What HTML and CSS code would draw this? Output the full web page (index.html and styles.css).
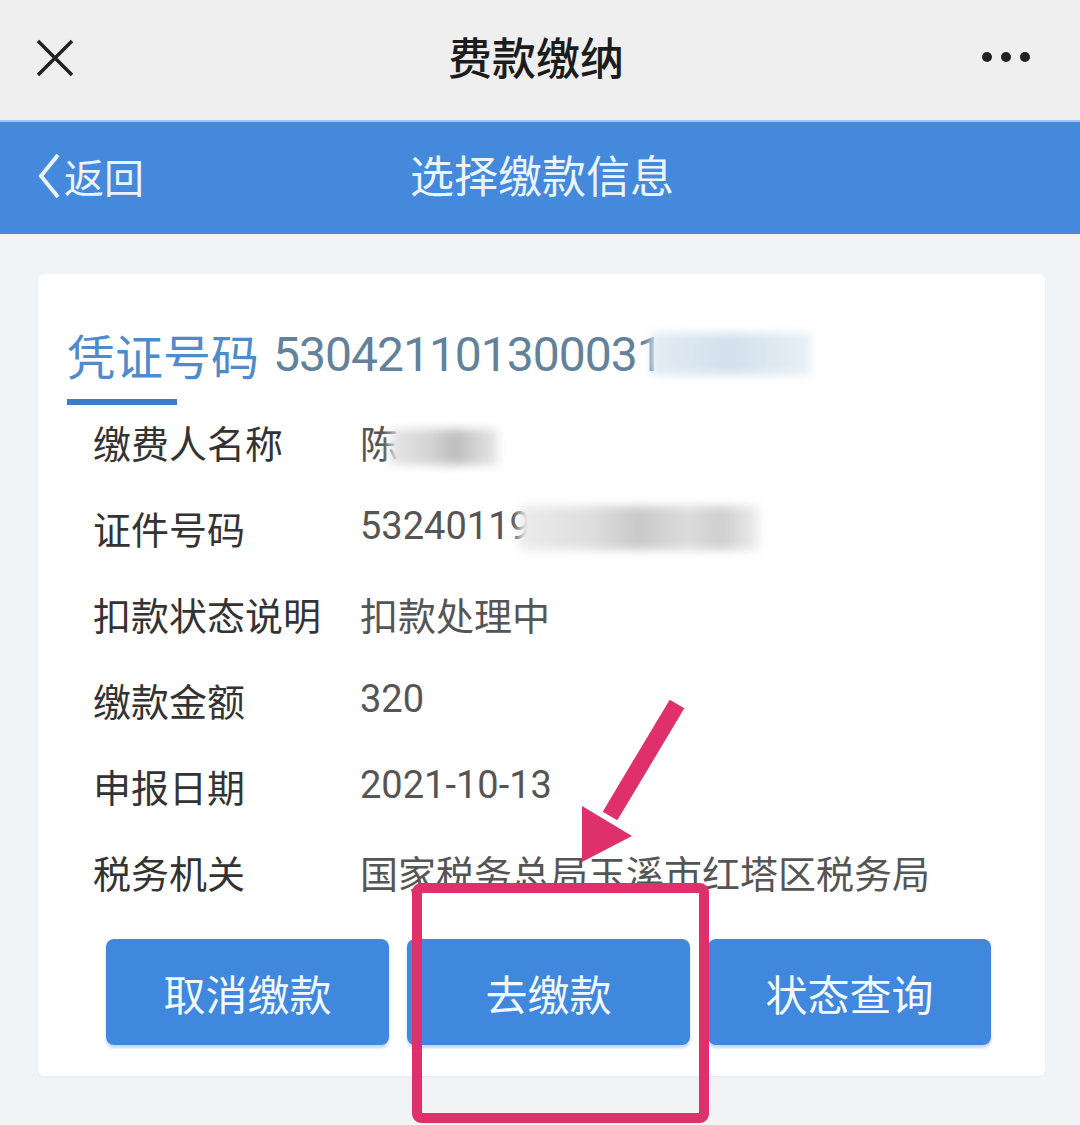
FILE: index.html
```html
<!DOCTYPE html>
<html lang="zh-CN">

<head>
    <meta charset="UTF-8">
    <meta name="viewport" content="width=device-width, initial-scale=1.0">
    <title>费款缴纳</title>
    <link rel="stylesheet" href="styles.css">
</head>

<body>
    <div class="topbar">
        <svg class="close" width="38" height="38" viewBox="0 0 38 38">
            <path d="M2 2 L36 36 M36 2 L2 36" stroke="#222" stroke-width="3.5" fill="none" />
        </svg>
        <div class="top-title">费款缴纳</div>
        <div class="dots">
            <span></span><span></span><span></span>
        </div>
    </div>

    <div class="navbar">
        <div class="back">
            <svg width="26" height="48" viewBox="0 0 26 48">
                <path d="M22 3 L5 24 L22 45" stroke="#eaf4ff" stroke-width="4" fill="none" />
            </svg>
            <span>返回</span>
        </div>
        <div class="nav-title">选择缴款信息</div>
        <div></div>
    </div>

    <div class="page">
        <div class="card">
            <div class="voucher">
                <span class="voucher-label">凭证号码</span>
                <span class="voucher-no">530421101300031</span><span class="blur blur-voucher"></span>
            </div>
            <div class="voucher-line"></div>

            <div class="rows">
                <div class="row">
                    <span class="label">缴费人名称</span>
                    <span class="value">陈<span class="blur blur-name"></span></span>
                </div>
                <div class="row">
                    <span class="label">证件号码</span>
                    <span class="value">53240119<span class="blur blur-id"></span></span>
                </div>
                <div class="row">
                    <span class="label">扣款状态说明</span>
                    <span class="value">扣款处理中</span>
                </div>
                <div class="row">
                    <span class="label">缴款金额</span>
                    <span class="value">320</span>
                </div>
                <div class="row">
                    <span class="label">申报日期</span>
                    <span class="value">2021-10-13</span>
                </div>
                <div class="row">
                    <span class="label">税务机关</span>
                    <span class="value">国家税务总局玉溪市红塔区税务局</span>
                </div>
            </div>

            <div class="buttons">
                <div class="btn">取消缴款</div>
                <div class="btn">去缴款</div>
                <div class="btn">状态查询</div>
            </div>
        </div>
    </div>

    <!-- annotation drawn over the screenshot -->
    <svg class="markup" width="1080" height="1125" viewBox="0 0 1080 1125">
        <path d="M677 704 L610 816" stroke="#e0306c" stroke-width="17" fill="none" />
        <polygon points="582,806 632,836 582,862" fill="#e0306c" />
        <rect x="417" y="888" width="287" height="230" rx="4" stroke="#e0306c" stroke-width="10" fill="none" />
    </svg>
</body>

</html>
```

FILE: styles.css
```css
body {
    margin: 0;
    width: 1080px;
    height: 1125px;
    overflow: hidden;
    background-color: #f2f3f4;
    font-family: Roboto, "Noto Sans CJK SC", sans-serif;
    position: relative;
}

.topbar {
    height: 120px;
    background-color: #efefef;
    display: flex;
    align-items: center;
    justify-content: space-between;
    padding: 0 50px 0 36px;
    box-sizing: border-box;
}

.close {
    margin-top: -4px;
}

.top-title {
    font-family: "Noto Sans CJK SC", sans-serif;
    font-size: 44px;
    font-weight: 500;
    color: #1c1c1c;
    margin-left: 16px;
    margin-top: -8px;
}

.dots {
    display: flex;
    gap: 9px;
    margin-top: -6px;
}

.dots span {
    width: 10px;
    height: 10px;
    border-radius: 50%;
    background-color: #222;
}

.navbar {
    height: 114px;
    background-color: #4589dc;
    border-top: 2px solid #9cc8f0;
    display: grid;
    grid-template-columns: 300px 1fr 300px;
    align-items: center;
    padding: 0 36px;
    box-sizing: border-box;
    color: #eaf4ff;
}

.back {
    display: flex;
    align-items: center;
    gap: 2px;
    font-family: "Noto Sans CJK SC", sans-serif;
    font-size: 40px;
    margin-top: -4px;
}

.nav-title {
    text-align: center;
    font-family: "Noto Sans CJK SC", sans-serif;
    font-size: 44px;
    margin-left: 4px;
    margin-top: -8px;
}

.page {
    padding: 40px 35px 0 38px;
}

.card {
    background-color: #fff;
    border-radius: 6px;
    padding: 48px 54px 31px 0;
    box-shadow: 0 1px 3px rgba(0, 0, 0, 0.04);
}

.voucher {
    padding-left: 29px;
    height: 64px;
    display: flex;
    align-items: center;
    white-space: nowrap;
}

.voucher-label {
    font-family: "Noto Sans CJK SC", sans-serif;
    font-size: 48px;
    color: #4f8bcb;
}

.voucher-no {
    font-size: 48px;
    color: #62819b;
    margin-left: 14px;
    letter-spacing: -1px;
}

.voucher-line {
    width: 110px;
    height: 6px;
    background-color: #3f7cc8;
    margin: 13px 0 0 29px;
}

.blur {
    display: inline-block;
    vertical-align: middle;
    background: linear-gradient(90deg, #dde4ea, #c9d3dc 40%, #e3e9ee 70%, #f2f5f7);
    filter: blur(5px);
}

.blur-voucher {
    width: 160px;
    height: 42px;
    margin-left: -12px;
    background: linear-gradient(90deg, #e2ecf4, #d2e0ec 50%, #e8f0f6);
}

.blur-name {
    width: 108px;
    height: 36px;
    margin-left: -8px;
    background: linear-gradient(90deg, #e6e6e6, #d2d2d2 40%, #bdbdbd 60%, #e8e8e8);
}

.blur-id {
    width: 240px;
    height: 44px;
    margin-left: -12px;
    background: linear-gradient(90deg, #ececec, #dedede 30%, #c9c9c9 50%, #dcdcdc 70%, #cfcfcf 85%, #eeeeee);
}

.rows {
    padding-left: 55px;
    margin-top: -7px;
}

.row {
    height: 86px;
    display: flex;
    align-items: center;
    font-size: 38px;
    white-space: nowrap;
}

.label {
    width: 267px;
    font-family: "Noto Sans CJK SC", sans-serif;
    color: #333;
}

.value {
    color: #555;
}

.buttons {
    display: flex;
    gap: 18px;
    padding-left: 68px;
    margin-top: 25px;
}

.btn {
    flex: 1;
    height: 106px;
    border-radius: 8px;
    background-color: #3f88dd;
    box-shadow: 0 3px 3px rgba(40, 90, 150, 0.25);
    color: #f2f8ff;
    font-family: "Noto Sans CJK SC", sans-serif;
    font-size: 42px;
    display: flex;
    align-items: center;
    justify-content: center;
}

.markup {
    position: absolute;
    left: 0;
    top: 0;
    pointer-events: none;
}
```
